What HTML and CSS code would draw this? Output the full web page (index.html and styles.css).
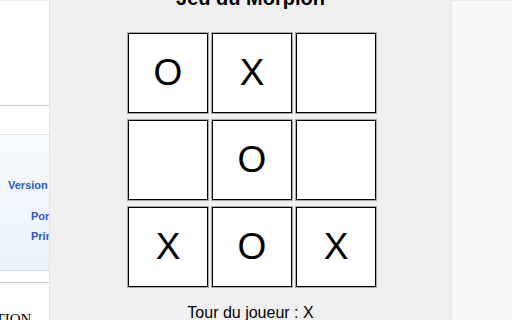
FILE: index.html
```html
<!DOCTYPE html>
<html lang="fr">
<head>
<meta charset="utf-8">
<title>Jeu du Morpion</title>
<link rel="stylesheet" href="styles.css">
</head>
<body>
<div class="page">
  <aside class="left">
    <div class="left-top"></div>
    <div class="left-band"></div>
    <div class="left-box">
      <a class="lnk lnk-version">Version</a>
      <a class="lnk lnk-por">Portail</a>
      <a class="lnk lnk-prin">Principal</a>
    </div>
    <div class="left-gap"></div>
    <div class="left-foot">SECTION</div>
  </aside>
  <main class="game">
    <h1 class="title">Jeu du Morpion</h1>
    <div class="board">
      <div class="cell">O</div>
      <div class="cell">X</div>
      <div class="cell"></div>
      <div class="cell"></div>
      <div class="cell">O</div>
      <div class="cell"></div>
      <div class="cell">X</div>
      <div class="cell">O</div>
      <div class="cell">X</div>
    </div>
    <p class="status">Tour du joueur : X</p>
  </main>
  <aside class="right"></aside>
</div>
</body>
</html>
```
FILE: styles.css
```css
html, body {
  margin: 0;
  padding: 0;
  width: 512px;
  height: 320px;
  overflow: hidden;
  background: #ffffff;
}
.page {
  display: flex;
  width: 512px;
  height: 320px;
}
.left {
  width: 49px;
  flex: none;
  display: flex;
  flex-direction: column;
  overflow: hidden;
  background: #ffffff;
  border-top: 1px solid #eaecf0;
}
.left > * {
  flex-shrink: 0;
}
.left-top {
  height: 104px;
  border-bottom: 1px solid #c8ccd1;
}
.left-band {
  height: 28px;
  border-bottom: 1px solid #dadde3;
}
.left-box {
  height: 136px;
  background: linear-gradient(#f8fbfe, #eaf2fb);
  border-bottom: 1px solid #c8dcf3;
  display: flex;
  flex-direction: column;
  padding-top: 44px;
  box-sizing: border-box;
  white-space: nowrap;
}
.lnk {
  font-family: "Liberation Sans", Arial, sans-serif;
  font-size: 11px;
  font-weight: bold;
  color: #2a58c8;
  line-height: 13px;
  display: block;
  width: 41px;
  overflow: hidden;
}
.lnk-version { margin-left: 8px; }
.lnk-por { margin-left: 31px; margin-top: 18px; width: 18px; }
.lnk-prin { margin-left: 31px; margin-top: 7px; width: 18px; }
.left-gap {
  height: 11px;
  border-bottom: 1px solid #c8ccd1;
}
.left-foot {
  font-family: "Liberation Serif", "Times New Roman", serif;
  font-size: 15px;
  line-height: 18px;
  color: #000;
  margin-top: 27px;
  margin-left: -32px;
  white-space: nowrap;
}
.game {
  width: 402px;
  flex: none;
  background: #f0f0f0;
  border-left: 1px solid #e2e3e7;
  box-sizing: border-box;
  display: flex;
  flex-direction: column;
  align-items: center;
  font-family: "Liberation Sans", Arial, sans-serif;
  color: #000;
}
.title {
  font-size: 20px;
  line-height: 24px;
  font-weight: bold;
  margin: -14px 0 0 0;
  height: 24px;
}
.board {
  margin-top: 23px;
  margin-left: 3px;
  display: grid;
  grid-template-columns: repeat(3, 80px);
  grid-auto-rows: 80px;
  column-gap: 4px;
  row-gap: 7px;
}
.cell {
  background: #ffffff;
  border: 1px solid #000;
  box-shadow: 0 0 0 1px #a8a8a8;
  box-sizing: border-box;
  display: flex;
  align-items: center;
  justify-content: center;
  font-size: 37px;
}
.status {
  margin: 17px 0 0 0;
  font-size: 16px;
  line-height: 18px;
}
.right {
  flex: 1;
  background: #f8f9fa;
  border-left: 1px solid #e4e6ea;
  border-top: 1px solid #e7e9ee;
}
```
